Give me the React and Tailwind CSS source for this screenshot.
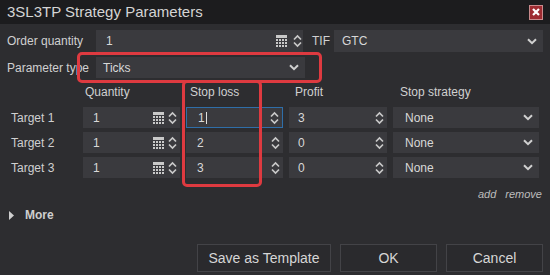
import React from "react";

const CalcIcon = () => (
  <svg width="11" height="12" viewBox="0 0 11 12" className="shrink-0">
    <rect x="0" y="0" width="11" height="3" fill="#c9c9c9" />
    {[0, 1, 2].map((r) =>
      [0, 1, 2, 3].map((c) => (
        <rect
          key={`${r}-${c}`}
          x={c * 3}
          y={4 + r * 3}
          width="2"
          height="2"
          fill="#c9c9c9"
        />
      )),
    )}
  </svg>
);

const Spinner = () => (
  <svg
    width="9"
    height="14"
    viewBox="0 0 9 14"
    fill="none"
    stroke="#c9c9c9"
    strokeWidth="1.7"
    className="shrink-0"
  >
    <path d="M1 5.5 L4.5 2 L8 5.5" />
    <path d="M1 8.5 L4.5 12 L8 8.5" />
  </svg>
);

const Chevron = () => (
  <svg width="10" height="7" viewBox="0 0 10 7" fill="none" className="shrink-0">
    <path d="M1 1.2 L5 5.2 L9 1.2" stroke="#d0d0d0" strokeWidth="2" />
  </svg>
);

function NumInput({ value, calc, width, pl = "pl-[10px]", focused, caret }) {
  return (
    <div
      className={`flex h-[21px] items-center bg-[#3a3a3e] pr-[3px] ${pl} ${width} ${
        focused ? "border border-[#2f6ea8]" : ""
      }`}
    >
      <span className="flex-1 text-[12px] text-[#d8d8d8]">
        {value}
        {caret && <span className="ml-px inline-block h-[12px] w-px bg-[#e0e0e0] align-middle" />}
      </span>
      {calc && (
        <div className="mr-[4px]">
          <CalcIcon />
        </div>
      )}
      <Spinner />
    </div>
  );
}

function Select({ value, width, h = "h-[21px]", pl = "pl-[12px]" }) {
  return (
    <div
      className={`flex items-center justify-between bg-[#3a3a3e] pr-[6px] ${h} ${pl} ${width}`}
    >
      <span className="text-[12px] text-[#d8d8d8]">{value}</span>
      <Chevron />
    </div>
  );
}

export default function App() {
  const targets = [
    { name: "Target 1", qty: "1", stop: "1", profit: "3" },
    { name: "Target 2", qty: "1", stop: "2", profit: "0" },
    { name: "Target 3", qty: "1", stop: "3", profit: "0" },
  ];

  return (
    <div className="relative flex h-[275px] w-[550px] flex-col overflow-hidden bg-[#2d2d30] font-['Liberation_Sans',Arial,sans-serif] text-[#d0d0d0]">
      {/* title bar */}
      <div className="flex h-[24px] items-center justify-between bg-[#1c1c1e] pl-[7px] pr-[7px]">
        <span className="text-[15px] text-[#d4d4d4]">3SL3TP Strategy Parameters</span>
        <div className="flex h-[15px] w-[14px] items-center justify-center border border-[#c98a8c] bg-[#9e2b31]">
          <svg width="8" height="8" viewBox="0 0 8 8">
            <path d="M1 1 L7 7 M7 1 L1 7" stroke="#ffffff" strokeWidth="2.2" />
          </svg>
        </div>
      </div>

      {/* order quantity */}
      <div className="mt-[6px] flex h-[22px] items-center pl-[7px]">
        <span className="w-[89px] text-[12px]">Order quantity</span>
        <div className="flex h-[22px] w-[207px] items-center bg-[#3a3a3e] pl-[10px] pr-[1px]">
          <span className="flex-1 text-[12px] text-[#d8d8d8]">1</span>
          <div className="mr-[6px]">
            <CalcIcon />
          </div>
          <Spinner />
        </div>
        <span className="ml-[9px] w-[15px] text-[12px]">TIF</span>
        <div className="ml-[7px]">
          <Select value="GTC" width="w-[209px]" h="h-[22px]" pl="pl-[8px]" />
        </div>
      </div>

      {/* parameter type */}
      <div className="mt-[5px] flex h-[21px] items-center pl-[7px]">
        <span className="w-[89px] text-[12px]">Parameter type</span>
        <Select value="Ticks" width="w-[209px]" pl="pl-[7px]" />
      </div>

      {/* headers */}
      <div className="mt-[7px] flex h-[14px] items-center pl-[83px] text-[12px]">
        <span className="w-[103px] pl-[2px]">Quantity</span>
        <span className="w-[103px] pl-[4px]">Stop loss</span>
        <span className="w-[104px] pl-[6px]">Profit</span>
        <span className="pl-[7px]">Stop strategy</span>
      </div>

      {/* targets */}
      <div className="mt-[8px] flex flex-col gap-[4px] pl-[11px]">
        {targets.map((t, i) => (
          <div key={t.name} className="flex items-center gap-[6px]">
            <span className="w-[66px] text-[12px]">{t.name}</span>
            <NumInput value={t.qty} calc width="w-[97px]" />
            <NumInput
              value={t.stop}
              width="w-[97px]"
              pl="pl-[11px]"
              focused={i === 0}
              caret={i === 0}
            />
            <NumInput value={t.profit} width="w-[98px]" pl="pl-[9px]" />
            <Select value="None" width="w-[146px]" />
          </div>
        ))}
      </div>

      {/* add / remove */}
      <div className="mt-[9px] flex h-[14px] items-center justify-end gap-[9px] pr-[8px] text-[11px] italic text-[#bdbdbd]">
        <span>add</span>
        <span>remove</span>
      </div>

      {/* more */}
      <div className="mt-[7px] flex h-[14px] items-center pl-[9px]">
        <svg width="6" height="9" viewBox="0 0 6 9">
          <path d="M0 0 L5 4.5 L0 9 Z" fill="#cfcfcf" />
        </svg>
        <span className="ml-[10px] text-[12px] font-bold text-[#cfcfcf]">More</span>
      </div>

      {/* buttons */}
      <div className="mt-[22px] flex justify-end gap-[9px] pr-[7px]">
        <button className="h-[28px] w-[134px] border border-[#434347] bg-[#2a2a2d] text-[14px] text-[#d6d6d6]">
          Save as Template
        </button>
        <button className="h-[28px] w-[97px] border border-[#434347] bg-[#2a2a2d] text-[14px] text-[#d6d6d6]">
          OK
        </button>
        <button className="h-[28px] w-[97px] border border-[#434347] bg-[#2a2a2d] text-[14px] text-[#d6d6d6]">
          Cancel
        </button>
      </div>

      {/* highlight annotations */}
      <div className="pointer-events-none absolute left-[77px] top-[52px] h-[31px] w-[245px] rounded-[5px] border-[3px] border-[#de3a40]" />
      <div className="pointer-events-none absolute left-[182px] top-[80px] h-[107px] w-[80px] rounded-[5px] border-[3px] border-[#de3a40]" />
    </div>
  );
}
